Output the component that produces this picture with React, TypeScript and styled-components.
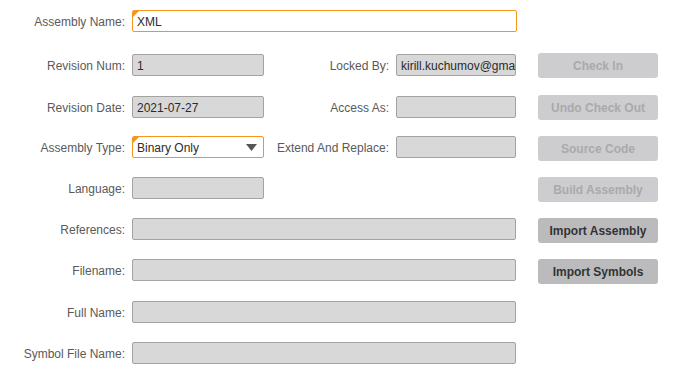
import React from "react";
import styled, { createGlobalStyle, css } from "styled-components";

const Global = createGlobalStyle`
  html, body { margin: 0; padding: 0; background: #ffffff; }
  body { font-family: "Liberation Sans", Arial, sans-serif; font-size: 12px; }
`;

const Form = styled.div`
  display: grid;
  grid-template-columns: 132px 132px 132px 120px 22px 120px;
  grid-template-rows: 28px 26px 24px 25px 25px 25px 26px 25px 25px;
  row-gap: 16px;
  padding-top: 10px;
  align-items: start;
`;

const Label = styled.label<{ $col: number }>`
  grid-column: ${(p) => p.$col};
  box-sizing: border-box;
  height: 22px;
  line-height: 22px;
  padding: 1px 7px 0 0;
  text-align: right;
  color: #5a5a5a;
  font-size: 12px;
  white-space: nowrap;
`;

const fieldBase = css<{ $required?: boolean }>`
  box-sizing: border-box;
  height: 22px;
  border: 1px solid ${(p) => (p.$required ? "#f7941e" : "#a3a3a3")};
  background: ${(p) => (p.$required ? "#ffffff" : "#d8d8d8")};
  border-radius: 2px;
  font-family: "Liberation Sans", Arial, sans-serif;
  font-size: 12px;
  color: #2b2b2b;
  padding: 1px 4px 0 4px;
  position: relative;
`;

const Field = styled.div<{ $span?: string; $required?: boolean; $wide?: boolean }>`
  ${fieldBase};
  grid-column: ${(p) => p.$span || "auto"};
  width: ${(p) => (p.$wide ? "385px" : "auto")};
  display: flex;
  align-items: center;
  overflow: hidden;
  white-space: nowrap;
`;

const Corner = styled.span`
  position: absolute;
  left: 0;
  top: 0;
  width: 0;
  height: 0;
  border-top: 6px solid #f7941e;
  border-right: 6px solid transparent;
`;

const SelectText = styled.span`
  flex: 1;
`;

const Caret = styled.svg`
  width: 11px;
  height: 7px;
  margin-right: 2px;
`;

const Button = styled.div<{ $enabled?: boolean }>`
  grid-column: 6;
  box-sizing: border-box;
  height: 25px;
  border-radius: 3px;
  display: flex;
  align-items: center;
  justify-content: center;
  font-weight: bold;
  font-size: 12px;
  background: ${(p) => (p.$enabled ? "#bbbbbd" : "#cdcdcf")};
  color: ${(p) => (p.$enabled ? "#333333" : "#a9a9ab")};
`;

const ButtonShift = styled(Button)`
  margin-top: -1px;
`;

export default function App() {
  return (
    <>
      <Global />
      <Form>
        <Label $col={1}>Assembly Name:</Label>
        <Field $span="2 / 5" $required $wide>
          <Corner />
          XML
        </Field>

        <Label $col={1}>Revision Num:</Label>
        <Field $span="2">1</Field>
        <Label $col={3}>Locked By:</Label>
        <Field $span="4">kirill.kuchumov@gmail.com</Field>
        <ButtonShift>Check In</ButtonShift>

        <Label $col={1}>Revision Date:</Label>
        <Field $span="2">2021-07-27</Field>
        <Label $col={3}>Access As:</Label>
        <Field $span="4" />
        <ButtonShift>Undo Check Out</ButtonShift>

        <Label $col={1}>Assembly Type:</Label>
        <Field $span="2" $required>
          <Corner />
          <SelectText>Binary Only</SelectText>
          <Caret viewBox="0 0 11 7">
            <path d="M0 0 L11 0 L5.5 7 Z" fill="#555555" />
          </Caret>
        </Field>
        <Label $col={3}>Extend And Replace:</Label>
        <Field $span="4" />
        <Button>Source Code</Button>

        <Label $col={1}>Language:</Label>
        <Field $span="2" />
        <Button>Build Assembly</Button>

        <Label $col={1}>References:</Label>
        <Field $span="2 / 5" />
        <Button $enabled>Import Assembly</Button>

        <Label $col={1}>Filename:</Label>
        <Field $span="2 / 5" />
        <Button $enabled>Import Symbols</Button>

        <Label $col={1}>Full Name:</Label>
        <Field $span="2 / 5" />

        <Label $col={1}>Symbol File Name:</Label>
        <Field $span="2 / 5" />
      </Form>
    </>
  );
}
